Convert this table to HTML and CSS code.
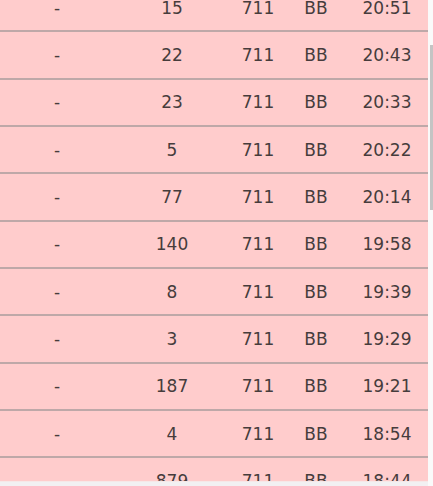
FILE: index.html
```html
<!DOCTYPE html>
<html lang="ja">
<head>
<meta charset="utf-8">
<title>list</title>
<link rel="stylesheet" href="styles.css">
</head>
<body>
<div class="viewport">
  <div class="pane">
    <div class="list">
      <div class="row"><span>-</span><span>15</span><span>711</span><span>BB</span><span>20:51</span></div>
      <div class="row"><span>-</span><span>22</span><span>711</span><span>BB</span><span>20:43</span></div>
      <div class="row"><span>-</span><span>23</span><span>711</span><span>BB</span><span>20:33</span></div>
      <div class="row"><span>-</span><span>5</span><span>711</span><span>BB</span><span>20:22</span></div>
      <div class="row"><span>-</span><span>77</span><span>711</span><span>BB</span><span>20:14</span></div>
      <div class="row"><span>-</span><span>140</span><span>711</span><span>BB</span><span>19:58</span></div>
      <div class="row"><span>-</span><span>8</span><span>711</span><span>BB</span><span>19:39</span></div>
      <div class="row"><span>-</span><span>3</span><span>711</span><span>BB</span><span>19:29</span></div>
      <div class="row"><span>-</span><span>187</span><span>711</span><span>BB</span><span>19:21</span></div>
      <div class="row"><span>-</span><span>4</span><span>711</span><span>BB</span><span>18:54</span></div>
      <div class="row"><span>-</span><span>879</span><span>711</span><span>BB</span><span>18:44</span></div>
    </div>
  </div>
  <div class="vscroll"><div class="thumb"></div></div>
  <div class="hscroll"></div>
  <div class="corner"></div>
</div>
</body>
</html>
```
FILE: styles.css
```css
html, body {
  margin: 0;
  padding: 0;
  background: #ffffff;
}
.viewport {
  width: 433px;
  height: 486px;
  display: grid;
  grid-template-columns: 428px 5px;
  grid-template-rows: 481px 5px;
  overflow: hidden;
}
.pane {
  overflow: hidden;
  background: #ffcccc;
}
.list {
  margin-top: -15px;
}
.row {
  box-sizing: border-box;
  height: 47.33px;
  display: grid;
  grid-template-columns: 114px 116px 56px 60px 82px;
  align-items: center;
  border-bottom: 2px solid #bea8a8;
  font-family: "DejaVu Sans", "Noto Sans CJK JP", sans-serif;
  font-size: 17px;
  color: #463c3c;
}
.row span {
  text-align: center;
}
.vscroll {
  background: #fafafa;
  position: relative;
}
.thumb {
  margin: 45px 0 0 2px;
  width: 3px;
  height: 165px;
  background: #c4c4c4;
}
.hscroll {
  background: #f2f0f2;
  border-top: 1px solid #f6e8e8;
}
.corner {
  background: #fafafa;
}
```
